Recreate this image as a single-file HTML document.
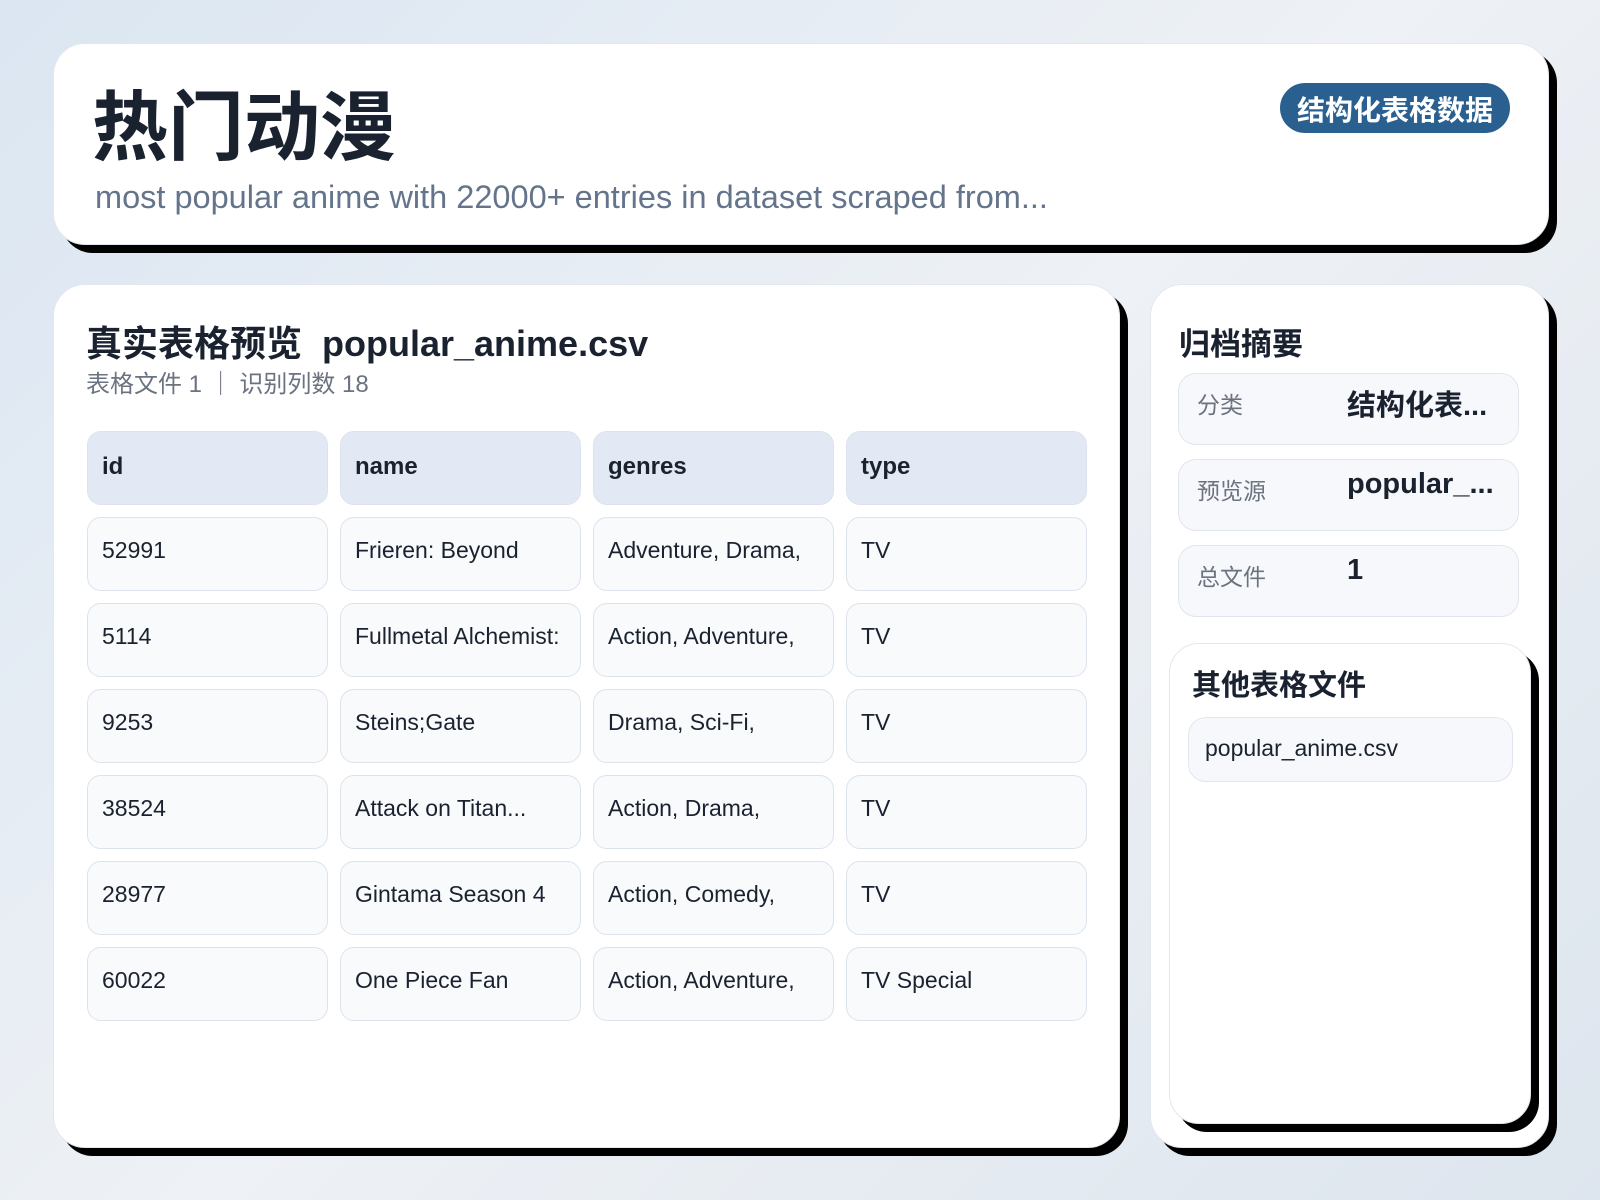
<!DOCTYPE html>
<html><head><meta charset="utf-8"><style>
*{box-sizing:border-box;margin:0;padding:0}
body{width:1600px;height:1200px;overflow:hidden;font-family:"Liberation Sans","Noto Sans CJK SC",sans-serif;background:linear-gradient(135deg,#dbe6f2 0%,#eef1f5 50%,#dde5ee 100%);position:relative;color:#1a2230}
.card{position:absolute;background:#fff;border-radius:32px;box-shadow:8px 8px 0 #000;border:1px solid #e3e8ef}
.h1{position:absolute;left:38px;top:43px;font-size:76px;font-weight:700;letter-spacing:0;line-height:1.1}
.sub{position:absolute;left:41px;top:135px;font-size:32.5px;color:#64748b}
.badge{position:absolute;left:1226px;top:39px;width:230px;height:50px;border-radius:25px;background:#2a6090;color:#fff;font-size:28px;font-weight:700;text-align:center;line-height:56px}
.cell{position:absolute;width:241px;height:74px;border-radius:14px;border:1px solid #dde3ec;background:#f8fafc;font-size:23px;padding-left:14px;line-height:64px;white-space:nowrap;overflow:hidden;color:#1a2230}
.hd{background:#e2e9f4;font-weight:700;font-size:24px;line-height:70px}
.item{position:absolute;left:27px;width:341px;height:72px;border-radius:18px;border:1px solid #e1e6ee;background:#f6f8fb}
.lab{position:absolute;left:18px;top:12px;font-size:23px;color:#6b7280}
.val{position:absolute;left:168px;top:8px;font-size:29px;font-weight:700}
</style></head><body>
<div class="card" style="left:53px;top:43px;width:1496px;height:202px">
<div class="h1">热门动漫</div>
<div class="sub">most popular anime with 22000+ entries in dataset scraped from...</div>
<div class="badge">结构化表格数据</div>
</div>
<div class="card" style="left:53px;top:284px;width:1067px;height:864px">
<div style="position:absolute;left:32px;top:30px;font-size:36px;font-weight:700">真实表格预览&nbsp; popular_anime.csv</div>
<div style="position:absolute;left:32px;top:79px;font-size:24px;color:#6b7280">表格文件 1 ｜ 识别列数 18</div>
</div>
<div class="card" style="left:1150px;top:284px;width:399px;height:864px">
<div style="position:absolute;left:28px;top:34px;font-size:31px;font-weight:700">归档摘要</div>
<div class="item" style="top:88px"><div class="lab">分类</div><div class="val">结构化表...</div></div>
<div class="item" style="top:174px"><div class="lab">预览源</div><div class="val">popular_...</div></div>
<div class="item" style="top:260px"><div class="lab">总文件</div><div class="val">1</div></div>
<div class="card" style="left:18px;top:358px;width:362px;height:481px;border-radius:30px">
<div style="position:absolute;left:22px;top:18px;font-size:29px;font-weight:700">其他表格文件</div>
<div style="position:absolute;left:18px;top:73px;width:325px;height:65px;border-radius:18px;border:1px solid #e1e6ee;background:#f6f8fb;font-size:23px;padding-left:16px;line-height:61px">popular_anime.csv</div>
</div>
</div>
<div style="position:absolute;left:0;top:0">
<div class="cell hd" style="left:87px;top:431px">id</div>
<div class="cell hd" style="left:340px;top:431px">name</div>
<div class="cell hd" style="left:593px;top:431px">genres</div>
<div class="cell hd" style="left:846px;top:431px">type</div>

<div class="cell" style="left:87px;top:517px">52991</div>
<div class="cell" style="left:340px;top:517px">Frieren: Beyond</div>
<div class="cell" style="left:593px;top:517px">Adventure, Drama,</div>
<div class="cell" style="left:846px;top:517px">TV</div>

<div class="cell" style="left:87px;top:603px">5114</div>
<div class="cell" style="left:340px;top:603px">Fullmetal Alchemist:</div>
<div class="cell" style="left:593px;top:603px">Action, Adventure,</div>
<div class="cell" style="left:846px;top:603px">TV</div>

<div class="cell" style="left:87px;top:689px">9253</div>
<div class="cell" style="left:340px;top:689px">Steins;Gate</div>
<div class="cell" style="left:593px;top:689px">Drama, Sci-Fi,</div>
<div class="cell" style="left:846px;top:689px">TV</div>

<div class="cell" style="left:87px;top:775px">38524</div>
<div class="cell" style="left:340px;top:775px">Attack on Titan...</div>
<div class="cell" style="left:593px;top:775px">Action, Drama,</div>
<div class="cell" style="left:846px;top:775px">TV</div>

<div class="cell" style="left:87px;top:861px">28977</div>
<div class="cell" style="left:340px;top:861px">Gintama Season 4</div>
<div class="cell" style="left:593px;top:861px">Action, Comedy,</div>
<div class="cell" style="left:846px;top:861px">TV</div>

<div class="cell" style="left:87px;top:947px">60022</div>
<div class="cell" style="left:340px;top:947px">One Piece Fan</div>
<div class="cell" style="left:593px;top:947px">Action, Adventure,</div>
<div class="cell" style="left:846px;top:947px">TV Special</div>
</div>
</body></html>
